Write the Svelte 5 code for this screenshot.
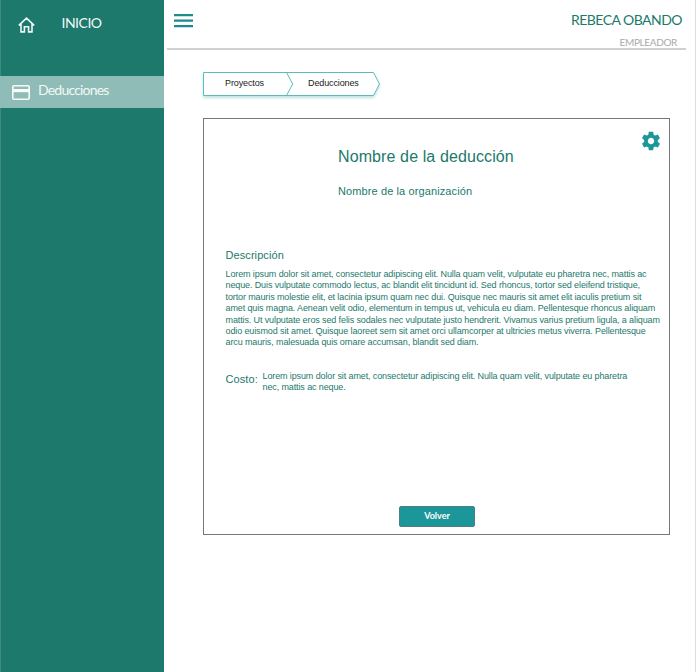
<script>
  const description = [
    'Lorem ipsum dolor sit amet, consectetur adipiscing elit. Nulla quam velit, vulputate eu pharetra nec, mattis ac',
    'neque. Duis vulputate commodo lectus, ac blandit elit tincidunt id. Sed rhoncus, tortor sed eleifend tristique,',
    'tortor mauris molestie elit, et lacinia ipsum quam nec dui. Quisque nec mauris sit amet elit iaculis pretium sit',
    'amet quis magna. Aenean velit odio, elementum in tempus ut, vehicula eu diam. Pellentesque rhoncus aliquam',
    'mattis. Ut vulputate eros sed felis sodales nec vulputate justo hendrerit. Vivamus varius pretium ligula, a aliquam',
    'odio euismod sit amet. Quisque laoreet sem sit amet orci ullamcorper at ultricies metus viverra. Pellentesque',
    'arcu mauris, malesuada quis ornare accumsan, blandit sed diam.'
  ];
  const cost = [
    'Lorem ipsum dolor sit amet, consectetur adipiscing elit. Nulla quam velit, vulputate eu pharetra',
    'nec, mattis ac neque.'
  ];
</script>

<div class="app">
  <nav class="sidebar">
    <a class="home" href="#inicio">
      <svg width="18" height="16" viewBox="0 0 18 16" fill="none" stroke="#edf7f5" stroke-width="1.6">
        <path d="M.8 8.4 8.5 1.2l7.7 7.2M3 6.8v8.1h3.4V9.7h4.2v5.2H14V6.8" />
      </svg>
      <span>INICIO</span>
    </a>
    <a class="item" href="#deducciones">
      <svg width="18" height="15" viewBox="0 0 18 15">
        <rect x=".8" y=".8" width="16.4" height="13.4" rx="1.3" fill="none" stroke="#f7fbfa" stroke-width="1.6" />
        <path d="M1 4h16v3.2H1z" fill="#f7fbfa" />
      </svg>
      <span>Deducciones</span>
    </a>
  </nav>

  <main>
    <header>
      <svg class="menu" width="19" height="14" viewBox="0 0 19 14" fill="#1b8b8d">
        <path d="M0 0h19v2.2H0zM0 5.5h19v2.2H0zM0 11h19v2.2H0z" />
      </svg>
      <div class="user">
        <div class="name">REBECA OBANDO</div>
        <div class="role">EMPLEADOR</div>
      </div>
    </header>

    <div class="crumbs">
      <svg width="180" height="28" viewBox="0 0 180 28" fill="#fff" stroke="#62b9bb">
        <path d="M1.5 1.5h170l6 11.5-6 11.5H1.5z" />
        <path d="M84.5 1.5 90.7 13l-6.2 11.5" fill="none" />
      </svg>
      <span class="c1">Proyectos</span>
      <span class="c2">Deducciones</span>
    </div>

    <section class="card">
      <svg class="gear" width="22" height="22" viewBox="0 0 24 24" fill="#1b9799">
        <path d="M19.43 12.98c.04-.32.07-.64.07-.98s-.03-.66-.07-.98l2.11-1.65c.19-.15.24-.42.12-.64l-2-3.46c-.12-.22-.39-.3-.61-.22l-2.49 1c-.52-.4-1.08-.73-1.69-.98l-.38-2.65C14.46 2.18 14.25 2 14 2h-4c-.25 0-.46.18-.49.42l-.38 2.65c-.61.25-1.17.59-1.69.98l-2.49-1c-.23-.09-.49 0-.61.22l-2 3.46c-.13.22-.07.49.12.64l2.11 1.65c-.04.32-.07.65-.07.98s.03.66.07.98l-2.11 1.65c-.19.15-.24.42-.12.64l2 3.46c.12.22.39.3.61.22l2.49-1c.52.4 1.08.73 1.69.98l.38 2.65c.03.24.24.42.49.42h4c.25 0 .46-.18.49-.42l.38-2.65c.61-.25 1.17-.59 1.69-.98l2.49 1c.23.09.49 0 .61-.22l2-3.46c.12-.22.07-.49-.12-.64l-2.11-1.65zM12 15.5c-1.93 0-3.5-1.57-3.5-3.5s1.57-3.5 3.5-3.5 3.5 1.57 3.5 3.5-1.57 3.5-3.5 3.5z" />
      </svg>
      <h1>Nombre de la deducción</h1>
      <h2>Nombre de la organización</h2>
      <h3>Descripción</h3>
      <div class="text">
        {#each description as line}<div>{line}</div>{/each}
      </div>
      <div class="cost">
        <h3>Costo:</h3>
        <div class="text">
          {#each cost as line}<div>{line}</div>{/each}
        </div>
      </div>
      <button>Volver</button>
    </section>
  </main>
</div>

<style>
  :global(body) { margin: 0; background: #fff; }
  .app {
    display: flex;
    box-sizing: border-box;
    width: 696px;
    height: 672px;
    overflow: hidden;
    border-right: 1px solid #ddd;
    font-family: "Liberation Sans", Arial, sans-serif;
    color: #1c796c;
  }
  .sidebar {
    width: 164px;
    flex: none;
    background: #1c796c;
    box-shadow: inset 1px 0 #3b8b80;
    font-family: Lato, sans-serif;
  }
  .sidebar a { display: flex; color: #f1f8f7; text-decoration: none; }
  .home { height: 76px; padding-left: 18px; box-sizing: border-box; font-size: 14px; }
  .home svg { margin-top: 17px; }
  .home span { margin: 14px 0 0 25.5px; line-height: 17px; letter-spacing: -0.5px; }
  .item { height: 32px; padding-left: 12px; background: #8fbcb6; font-size: 14px; }
  .item svg { margin-top: 9px; }
  .item span { margin: 5px 0 0 8px; line-height: 17px; letter-spacing: -0.8px; }
  main { flex: 1; min-width: 0; }
  header {
    display: flex;
    justify-content: space-between;
    box-sizing: border-box;
    height: 50px;
    margin: 0 9px 0 3px;
    padding: 14px 4px 0 7px;
    border-bottom: 2px solid #d0d0d0;
  }
  .user { font-family: Lato, sans-serif; text-align: right; margin-top: -3px; white-space: nowrap; }
  .name { font-size: 14px; line-height: 18px; letter-spacing: -0.53px; }
  .role { margin: 5px 5px 0 0; font-size: 10px; line-height: 16px; color: #a9a9a9; letter-spacing: -0.35px; }
  .crumbs { position: relative; width: 180px; height: 28px; margin: 21px 0 0 38px; color: #222; font-size: 9px; letter-spacing: -0.12px; }
  .crumbs svg { display: block; filter: drop-shadow(0 2px 1.5px #bde2e1); }
  .crumbs span { position: absolute; top: 7px; line-height: 10px; }
  .c1 { left: 23px; }
  .c2 { left: 106px; }
  .card {
    position: relative;
    box-sizing: border-box;
    width: 467px;
    height: 417px;
    margin: 19px 0 0 39px;
    padding-left: 21.5px;
    border: 1px solid #777;
  }
  .gear { position: absolute; top: 11px; right: 7px; }
  h1, h2, h3 { margin: 0; font-weight: 400; white-space: nowrap; }
  h1 { padding: 28px 0 0 112.5px; font-size: 16px; line-height: 20px; letter-spacing: 0.11px; }
  h2 { padding: 17px 0 0 112.5px; font-size: 11px; line-height: 14px; letter-spacing: 0.11px; }
  h3 { font-size: 11px; line-height: 14px; letter-spacing: 0.08px; }
  h2 + h3 { margin-top: 50px; }
  .text { font-size: 9px; line-height: 11.4px; letter-spacing: -0.115px; white-space: nowrap; }
  h3 + .text { margin-top: 7px; }
  .cost { display: flex; margin-top: 22px; }
  .cost h3 { width: 37px; margin-top: 1px; }
  .cost h3 + .text { margin-top: 0; }
  button {
    display: block;
    width: 76px;
    height: 21px;
    margin: 112px 0 0 173.5px;
    padding: 0 0 1px;
    border: 1px solid #4f7f80;
    border-radius: 2px;
    background: #1b9799;
    color: #fff;
    font: 700 9px/18px Lato, sans-serif;
  }
</style>
